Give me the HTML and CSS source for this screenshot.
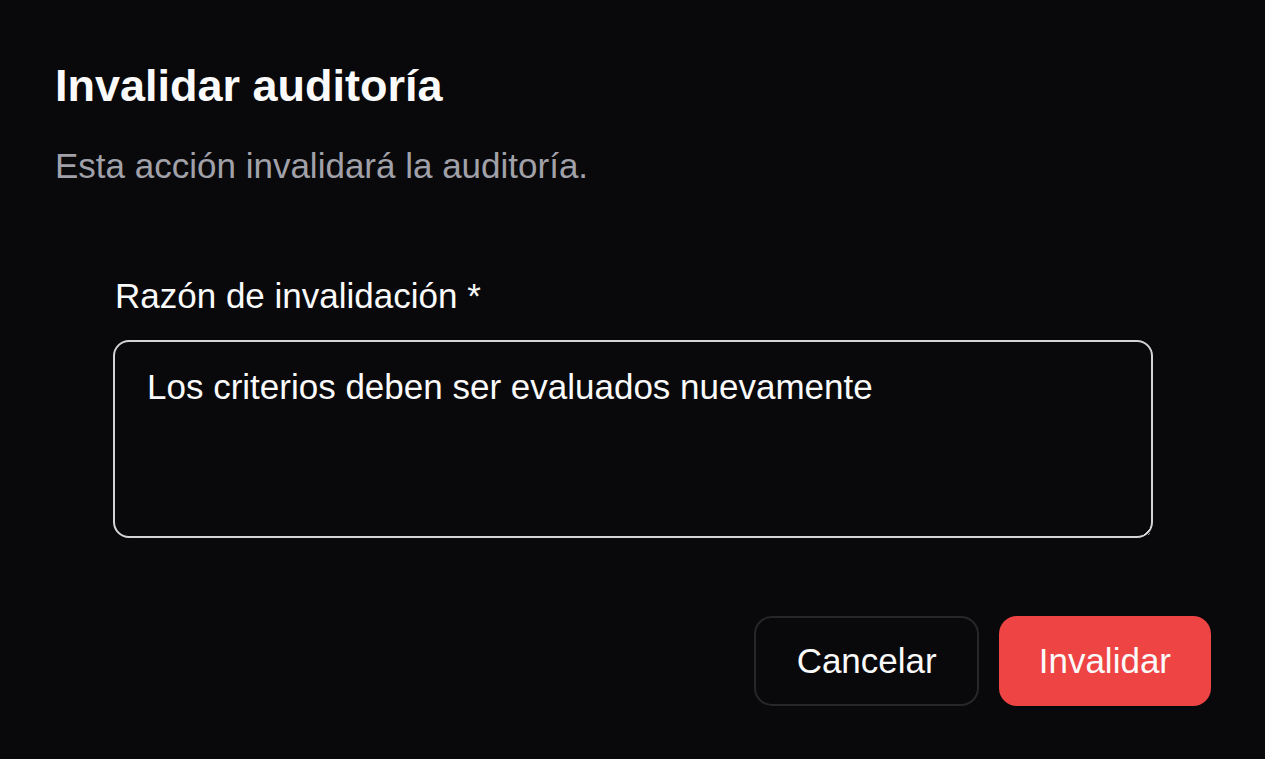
FILE: index.html
```html
<!DOCTYPE html>
<html lang="es">
<head>
<meta charset="utf-8">
<title>Invalidar auditoría</title>
<link rel="stylesheet" href="styles.css">
</head>
<body>
<div class="dialog">
  <div class="header">
    <h2 class="title">Invalidar auditoría</h2>
    <p class="description">Esta acción invalidará la auditoría.</p>
  </div>
  <div class="form">
    <label class="label" for="reason">Razón de invalidación *</label>
    <textarea id="reason" class="textarea">Los criterios deben ser evaluados nuevamente</textarea>
  </div>
  <div class="footer">
    <button class="btn btn-outline" type="button">Cancelar</button>
    <button class="btn btn-danger" type="button">Invalidar</button>
  </div>
</div>
<script src="script.js"></script>
</body>
</html>
```

FILE: styles.css
```css
* { box-sizing: border-box; }

html, body {
  margin: 0;
  padding: 0;
  background: #09090b;
  color: #fafafa;
  font-family: "Liberation Sans", Arial, sans-serif;
}

.dialog {
  width: 1159px;
  margin-left: 53px;
  padding-top: 51px;
  display: flex;
  flex-direction: column;
}

.header {
  display: flex;
  flex-direction: column;
  gap: 20px;
  padding-left: 2px;
}

.title {
  margin: 0;
  font-size: 45px;
  line-height: 70px;
  font-weight: 700;
  color: #fafafa;
}

.description {
  margin: 0;
  font-size: 35px;
  line-height: 50px;
  color: #a1a1aa;
}

.form {
  display: flex;
  flex-direction: column;
  gap: 19px;
  padding: 80px 59px 0 60px;
}

.label {
  font-size: 35px;
  line-height: 50px;
  color: #fafafa;
  padding-left: 2px;
}

.textarea {
  display: block;
  width: 100%;
  height: 198px;
  margin: 0;
  padding: 20px 30px 20px 32px;
  border: 2.5px solid #d4d4d8;
  border-radius: 16px;
  background: #09090b;
  color: #fafafa;
  caret-color: #fafafa;
  font-family: "Liberation Sans", Arial, sans-serif;
  font-size: 35px;
  line-height: 50px;
  outline: none;
  resize: vertical;
}

.footer {
  display: flex;
  justify-content: flex-end;
  gap: 21px;
  padding-top: 78px;
  padding-right: 1px;
}

.btn {
  height: 90px;
  font-family: "Liberation Sans", Arial, sans-serif;
  font-size: 35px;
  line-height: 50px;
  border-radius: 18px;
  color: #fafafa;
  cursor: pointer;
}

.btn-outline {
  background: #09090b;
  border: 2.5px solid #27272a;
  padding: 0 40px 0 41px;
  margin-right: -1px;
}

.btn-danger {
  background: #ef4444;
  border: none;
  padding: 0 40px;
}
```

FILE: script.js
```js
var ta = document.getElementById('reason');
ta.focus();
ta.setSelectionRange(ta.value.length, ta.value.length);
```
